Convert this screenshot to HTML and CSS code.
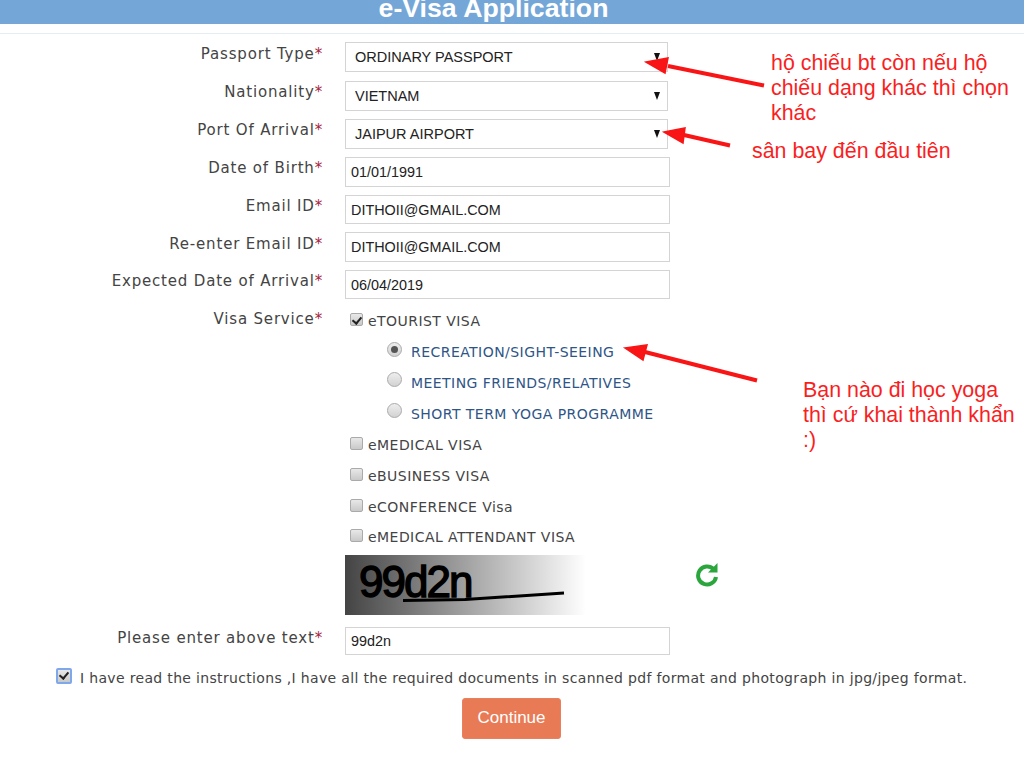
FILE: index.html
```html
<!DOCTYPE html>
<html lang="en">
<head>
  <meta charset="utf-8">
  <meta name="viewport" content="width=device-width, initial-scale=1.0">
  <title>e-Visa Application</title>
  <link rel="stylesheet" href="styles.css">
</head>
<body>

<div class="title-bar"><h1>e-Visa Application</h1></div>

<form class="visa-form">
  <div class="form-row">
    <label class="field-label">Passport Type<span class="req">*</span></label>
    <div class="select-wrap"><select class="field select-field"><option>ORDINARY PASSPORT</option></select></div>
  </div>
  <div class="form-row">
    <label class="field-label">Nationality<span class="req">*</span></label>
    <div class="select-wrap"><select class="field select-field"><option>VIETNAM</option></select></div>
  </div>
  <div class="form-row">
    <label class="field-label">Port Of Arrival<span class="req">*</span></label>
    <div class="select-wrap"><select class="field select-field"><option>JAIPUR AIRPORT</option></select></div>
  </div>
  <div class="form-row">
    <label class="field-label">Date of Birth<span class="req">*</span></label>
    <input class="field text-field" type="text" value="01/01/1991">
  </div>
  <div class="form-row">
    <label class="field-label">Email ID<span class="req">*</span></label>
    <input class="field text-field" type="text" value="DITHOII@GMAIL.COM">
  </div>
  <div class="form-row">
    <label class="field-label">Re-enter Email ID<span class="req">*</span></label>
    <input class="field text-field" type="text" value="DITHOII@GMAIL.COM">
  </div>
  <div class="form-row">
    <label class="field-label">Expected Date of Arrival<span class="req">*</span></label>
    <input class="field text-field" type="text" value="06/04/2019">
  </div>

  <div class="form-row service-row">
    <label class="field-label">Visa Service<span class="req">*</span></label>
    <div class="service-list">
      <label class="choice"><input type="checkbox" checked><span>eTOURIST VISA</span></label>
      <div class="sub-list">
        <label class="choice sub"><input type="radio" name="purpose" checked><span>RECREATION/SIGHT-SEEING</span></label>
        <label class="choice sub"><input type="radio" name="purpose"><span>MEETING FRIENDS/RELATIVES</span></label>
        <label class="choice sub"><input type="radio" name="purpose"><span>SHORT TERM YOGA PROGRAMME</span></label>
      </div>
      <label class="choice"><input type="checkbox"><span>eMEDICAL VISA</span></label>
      <label class="choice"><input type="checkbox"><span>eBUSINESS VISA</span></label>
      <label class="choice"><input type="checkbox"><span>eCONFERENCE Visa</span></label>
      <label class="choice"><input type="checkbox"><span>eMEDICAL ATTENDANT VISA</span></label>
    </div>
  </div>

  <div class="captcha-row">
    <div class="captcha">
      <span class="captcha-text">99d2n</span>
      <svg class="captcha-line" width="241" height="60" viewBox="0 0 241 60">
        <path d="M58 45.5L120 44.5L219 38" fill="none" stroke="#000" stroke-width="3"/>
      </svg>
    </div>
    <svg class="refresh" width="24" height="26" viewBox="0 0 24 26">
      <path d="M18.5 8.2A9 9 0 1 0 21 16" fill="none" stroke="#2aa63d" stroke-width="4"/>
      <path d="M13 11.5L22.5 11.5L22.5 2Z" fill="#2aa63d"/>
    </svg>
  </div>

  <div class="form-row captcha-input">
    <label class="field-label">Please enter above text<span class="req">*</span></label>
    <input class="field text-field" type="text" value="99d2n">
  </div>

  <label class="agree"><input type="checkbox" checked><span>I have read the instructions ,I have all the required documents in scanned pdf format and photograph in jpg/jpeg format.</span></label>

  <div class="actions"><button class="continue-btn" type="button">Continue</button></div>
</form>

<!-- red notes drawn over the screenshot -->
<svg class="arrows" width="1024" height="760" viewBox="0 0 1024 760">
  <g fill="#f91515" stroke="#f91515">
    <path d="M764 85.5L668 66" fill="none" stroke-width="4"/>
    <path d="M646 62L668 58L665 73Z" stroke-width="1.5"/>
    <path d="M730 145.5L684 135" fill="none" stroke-width="4"/>
    <path d="M664 132L685 128L683 143Z" stroke-width="1.5"/>
    <path d="M757 380.5L645 352" fill="none" stroke-width="4"/>
    <path d="M625 348L647 345L643 360Z" stroke-width="1.5"/>
  </g>
</svg>
<p class="note note-passport">hộ chiếu bt còn nếu hộ chiếu dạng khác thì chọn khác</p>
<p class="note note-airport">sân bay đến đầu tiên</p>
<p class="note note-yoga">Bạn nào đi học yoga thì cứ khai thành khẩn :)</p>

</body>
</html>
```

FILE: styles.css
```css
html, body {
  height: 760px;
  overflow: hidden;
}

body {
  margin: 0;
  background: #fff;
  font-family: "DejaVu Sans", Verdana, sans-serif;
  color: #444;
  position: relative;
}

/* Title bar */
.title-bar {
  height: 24px;
  background: #74a7d7;
  overflow: hidden;
  margin-bottom: 9px;
}

.title-bar h1 {
  margin: -8px 0 0;
  font: bold 26.7px/32px "Liberation Sans", Arial, sans-serif;
  color: #fff;
  text-align: center;
  padding-right: 37px;
}

/* Form rows */
.visa-form {
  border-top: 1px solid #e6edf2;
  padding-top: 8.4px;
}

.form-row {
  display: flex;
  align-items: flex-start;
  margin-bottom: 8.3px;
}

.field-label {
  flex: none;
  width: 345px;
  padding: 1.2px 22px 0 0;
  box-sizing: border-box;
  text-align: right;
  font-size: 15px;
  letter-spacing: 0.82px;
  line-height: 20px;
  color: #444;
}

.req {
  color: #a5243d;
}

.field {
  box-sizing: border-box;
  height: 30px;
  border: 1px solid #d4d4d4;
  background: #fff;
  font-family: "Liberation Sans", Arial, sans-serif;
  color: #222;
  outline: none;
}

.select-wrap {
  position: relative;
  width: 323px;
}

.select-wrap::after {
  content: "";
  position: absolute;
  right: 8px;
  top: 11px;
  border-left: 3.5px solid transparent;
  border-right: 3.5px solid transparent;
  border-top: 8px solid #111;
}

.select-field {
  width: 100%;
  appearance: none;
  border-radius: 0;
  padding: 0 9px;
  font-size: 14.5px;
}

.text-field {
  width: 325px;
  padding: 0 5px;
  font-size: 14.4px;
  height: 29.3px;
}

/* Visa service options */
.service-row {
  margin-bottom: 0;
}

.service-list {
  display: flex;
  flex-direction: column;
  padding-left: 5px;
  margin-top: -1.9px;
}

.sub-list {
  display: flex;
  flex-direction: column;
  padding-left: 37px;
}

.choice {
  display: flex;
  align-items: center;
  height: 30.9px;
  font-size: 14px;
  letter-spacing: 0.45px;
  gap: 5px;
  color: #444;
}

.choice.sub {
  color: #2f5587;
  gap: 9px;
}

input[type="checkbox"],
input[type="radio"] {
  appearance: none;
  margin: 0 0 3px;
  width: 13px;
  height: 13px;
  flex: none;
  background: linear-gradient(#e8e8e8, #c9c9c9);
  border: 1px solid #aaa;
  box-sizing: border-box;
  position: relative;
}

input[type="checkbox"] {
  border-radius: 2px;
}

input[type="radio"] {
  width: 15px;
  height: 15px;
  margin-bottom: 6px;
  border-radius: 50%;
  background: linear-gradient(#eee, #d2d2d2);
}

input[type="radio"]:checked::after {
  content: "";
  position: absolute;
  left: 3px;
  top: 3px;
  width: 7px;
  height: 7px;
  border-radius: 50%;
  background: #555;
}

input[type="checkbox"]:checked::after {
  content: "";
  position: absolute;
  left: 2.5px;
  top: 0.5px;
  width: 4px;
  height: 7px;
  border: solid #222;
  border-width: 0 2px 2px 0;
  transform: rotate(40deg);
}

/* Captcha */
.captcha-row {
  display: flex;
  align-items: flex-start;
  padding: 2px 0 0 345px;
  margin-bottom: 12px;
}

.captcha {
  position: relative;
  width: 241px;
  height: 60px;
  background: linear-gradient(90deg, #444, #fff);
  overflow: hidden;
}

.captcha-text {
  display: block;
  padding-left: 14px;
  font: 44px/54px "Liberation Sans", Arial, sans-serif;
  letter-spacing: -2px;
  color: #000;
  -webkit-text-stroke: 1.4px #000;
}

.captcha-line {
  position: absolute;
  left: 0;
  top: 0;
}

.refresh {
  margin: 6px 0 0 109px;
}

.captcha-input {
  margin-bottom: 0;
}

.captcha-input .text-field {
  height: 28px;
}

/* Agreement and submit */
.agree {
  display: flex;
  align-items: center;
  gap: 8px;
  margin: 13px 0 0 56px;
  font-size: 14px;
  letter-spacing: 0.33px;
  line-height: 20px;
  color: #444;
}

.agree input[type="checkbox"] {
  width: 16px;
  height: 16px;
  margin: 0 0 3px;
  border: 2px solid #7fa8ea;
}

.agree input[type="checkbox"]:checked::after {
  left: 3px;
  top: 0;
}

.actions {
  display: flex;
  padding: 10px 0 0 462px;
}

.continue-btn {
  width: 99px;
  height: 41px;
  background: #e97a56;
  border: 1px solid #e8805f;
  border-radius: 3px;
  color: #fff;
  font: 17px "Liberation Sans", Arial, sans-serif;
}

/* Annotations */
.arrows {
  position: absolute;
  left: 0;
  top: 0;
  pointer-events: none;
}

.note {
  position: absolute;
  margin: 0;
  font: 21.4px/25px "Liberation Sans", Arial, sans-serif;
  color: #f91f1f;
}

.note-passport {
  left: 771px;
  top: 51px;
  width: 245px;
}

.note-airport {
  left: 752px;
  top: 139px;
}

.note-yoga {
  left: 803px;
  top: 378px;
  width: 216px;
}
```
